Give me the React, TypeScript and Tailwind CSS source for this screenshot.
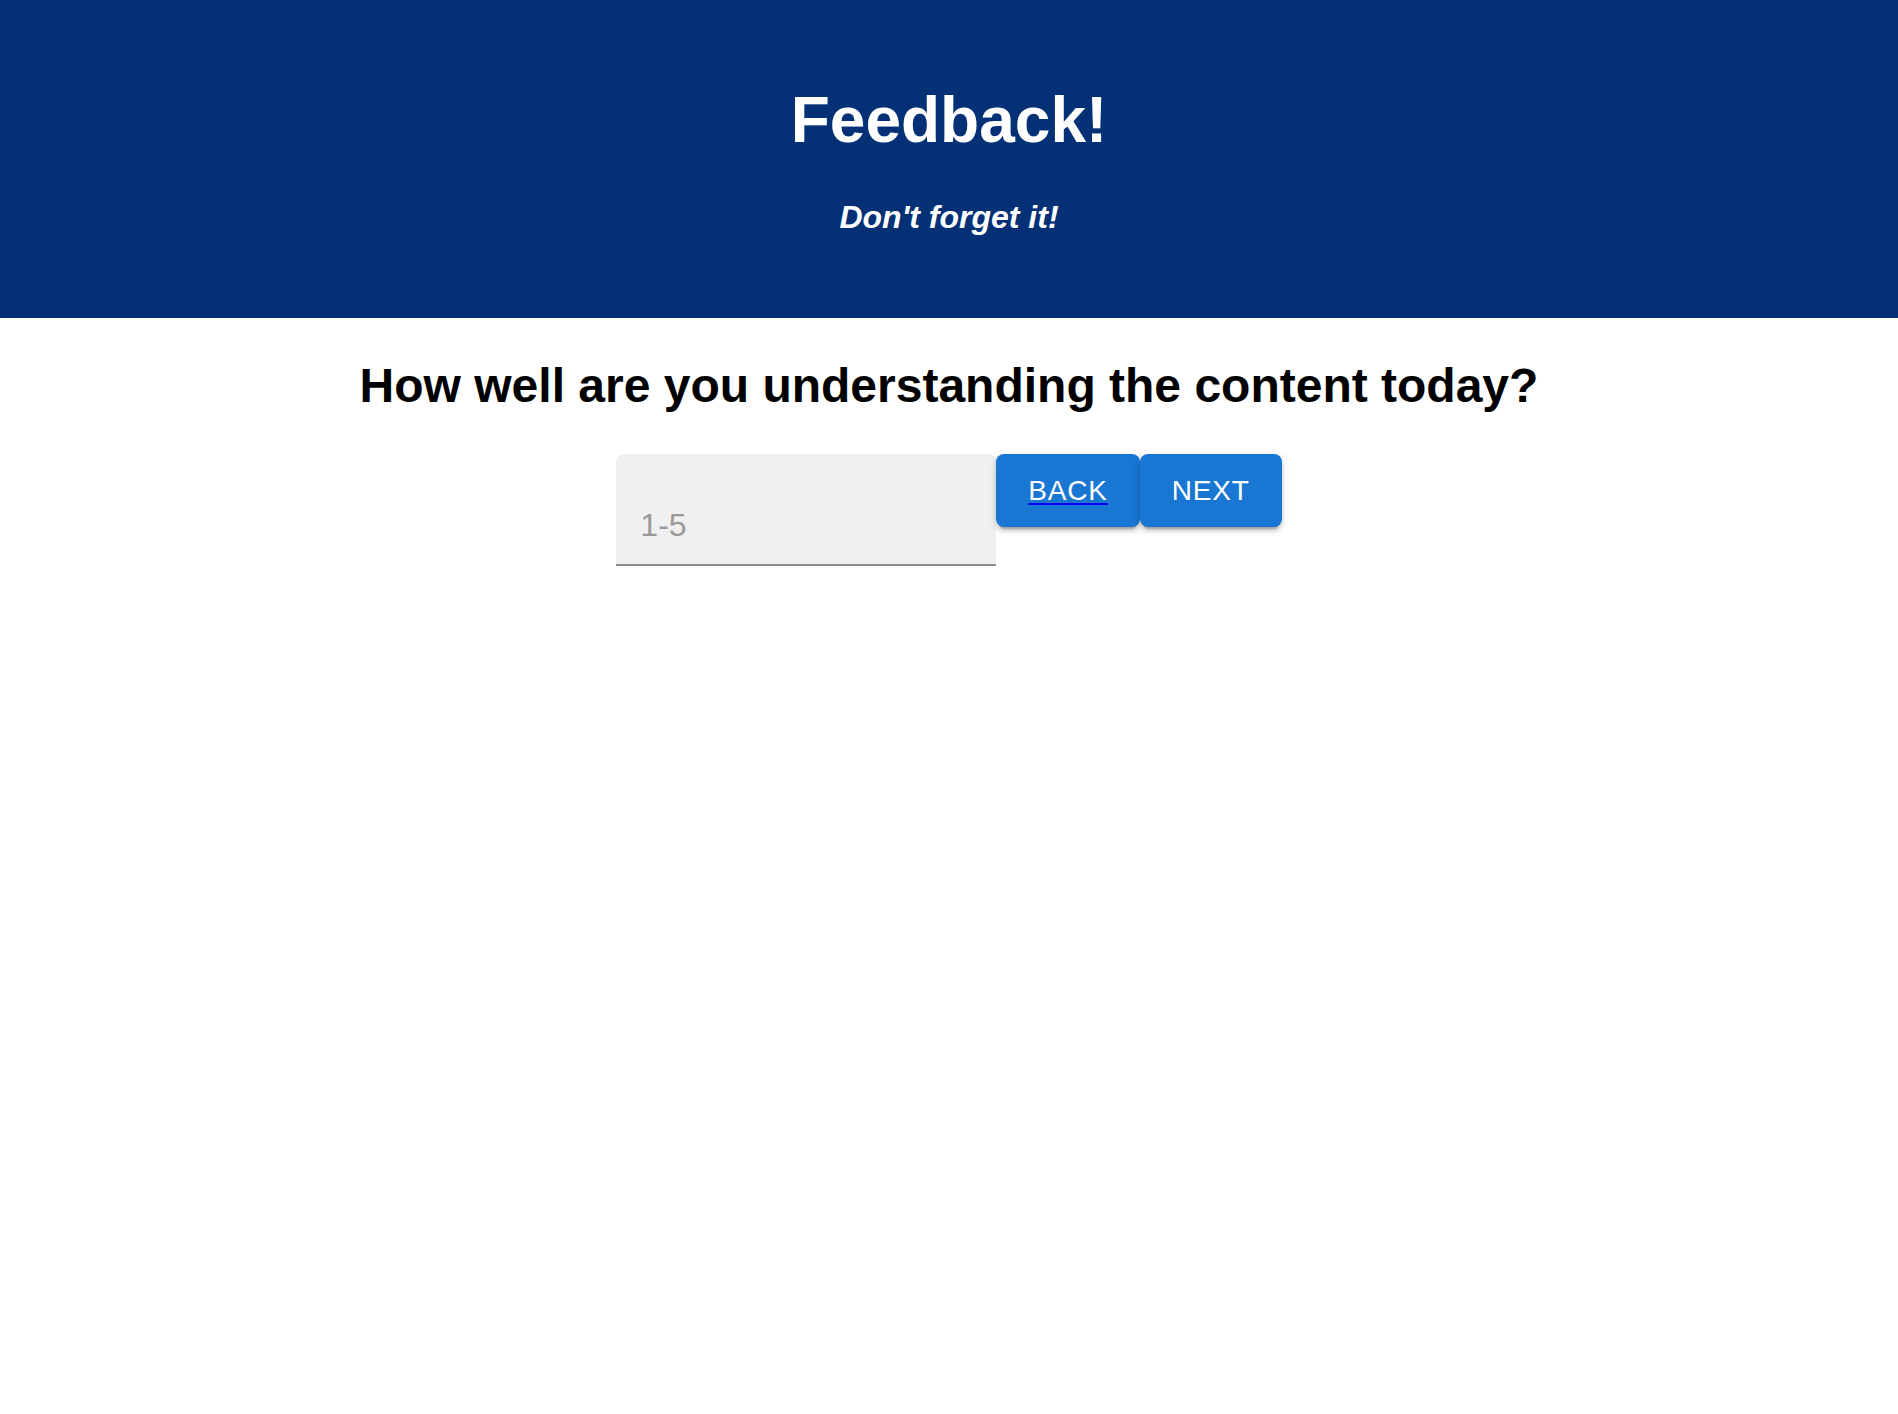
import React from "react";

export default function App() {
  return (
    <div className="min-h-[1414px] bg-white font-['Liberation_Sans','Helvetica',Arial,sans-serif] text-black">
      <header className="h-[318px] bg-[#043176] pt-[83px] text-center text-white">
        <h1 className="text-[64px] font-bold leading-[74px]">Feedback!</h1>
        <p className="mt-[42px] text-[32px] font-bold italic leading-[37px]">Don't forget it!</p>
      </header>
      <h2 className="mt-[40px] text-center text-[48px] font-bold leading-[55px]">
        How well are you understanding the content today?
      </h2>
      <div className="mt-[41px] flex items-start justify-center">
        <input
          type="text"
          placeholder="1-5"
          className="box-border h-[112px] w-[380px] rounded-t-[8px] border-b-2 border-[#8c8c8c] bg-[#f0f0f0] pb-[16px] pl-[24px] pr-[24px] pt-[48px] text-[32px] text-black outline-none placeholder:text-[#9a9a9a] placeholder:opacity-100"
        />
        <button className="flex h-[73px] items-center rounded-[8px] bg-[#1976d2] px-[32px] text-[28px] uppercase tracking-[0.8px] text-white shadow-[0_6px_2px_-4px_rgba(0,0,0,0.2),0_4px_4px_0_rgba(0,0,0,0.14),0_2px_10px_0_rgba(0,0,0,0.12)]">
          <span className="underline decoration-[#0000ee] decoration-[2px] underline-offset-[3px]">Back</span>
        </button>
        <button className="flex h-[73px] items-center rounded-[8px] bg-[#1976d2] px-[32px] text-[28px] uppercase tracking-[0.8px] text-white shadow-[0_6px_2px_-4px_rgba(0,0,0,0.2),0_4px_4px_0_rgba(0,0,0,0.14),0_2px_10px_0_rgba(0,0,0,0.12)]">
          Next
        </button>
      </div>
    </div>
  );
}
